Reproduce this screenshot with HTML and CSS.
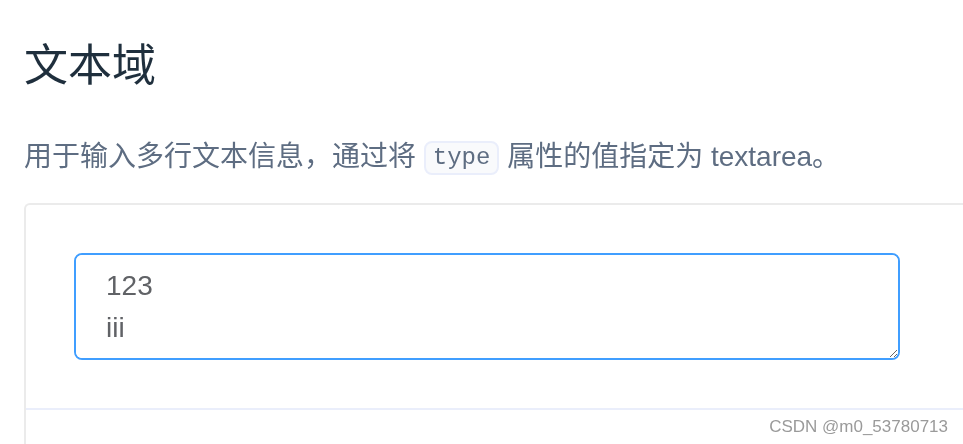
FILE: index.html
```html
<!DOCTYPE html>
<html lang="zh">
<head>
    <meta charset="UTF-8">
    <meta name="viewport" content="width=device-width, initial-scale=1.0">
    <title>文本域</title>
    <link rel="stylesheet" href="styles.css">
</head>
<body>
    <div class="page">
        <h3 class="title">文本域</h3>
        <p class="desc">用于输入多行文本信息，通过将 <code>type</code> 属性的值指定为 textarea。</p>

        <div class="demo-block">
            <div class="source">
                <textarea class="el-textarea" rows="2">123
iii</textarea>
            </div>
            <div class="meta"></div>
        </div>
    </div>

    <div class="watermark">CSDN @m0_53780713</div>
</body>
</html>
```

FILE: styles.css
```css
* {
    margin: 0;
    padding: 0;
    box-sizing: border-box;
    font-family: "Liberation Sans", "Noto Sans CJK SC", sans-serif;
}

html, body {
    width: 963px;
    height: 444px;
    overflow: hidden;
    background-color: #fff;
}

.page {
    padding: 26px 0 0 24px;
}

/* 标题 */
.title {
    font-size: 44px;
    font-weight: 400;
    color: #1f2f3d;
    line-height: 80px;
}

.desc {
    margin-top: 27px;
    font-size: 28px;
    line-height: 48px;
    color: #5e6d82;
}

.desc code {
    display: inline-block;
    font-family: "Liberation Mono", "DejaVu Sans Mono", monospace;
    font-size: 24px;
    line-height: 30px;
    color: #5e6d82;
    background-color: #f9fafc;
    border: 2px solid #eaeefb;
    border-radius: 8px;
    padding: 0 7px;
    vertical-align: 2px;
}

/* 示例区域 */
.demo-block {
    margin-top: 22px;
    border: 2px solid #ebebeb;
    border-right: none;
    border-bottom: none;
    border-radius: 6px 0 0 0;
}

.source {
    padding: 48px;
}

.el-textarea {
    display: block;
    width: 826px;
    height: 107px;
    padding: 10px 30px;
    font-size: 28px;
    line-height: 1.5;
    color: #606266;
    border: 2px solid #409eff;
    border-radius: 8px;
    outline: none;
    resize: vertical;
    background: #fff;
}

.meta {
    height: 40px;
    border-top: 2px solid #eaeefb;
}

.watermark {
    position: absolute;
    right: 15px;
    bottom: 7px;
    font-size: 17px;
    color: #9a9a9a;
}
```
